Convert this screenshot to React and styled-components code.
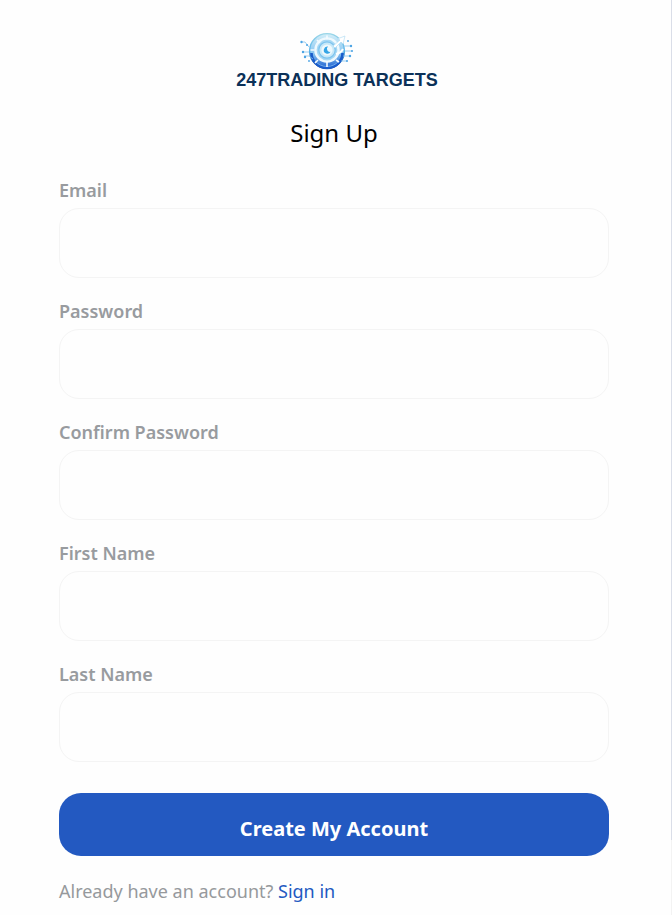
import React, { useState } from "react";
import styled, { createGlobalStyle } from "styled-components";

const GlobalStyle = createGlobalStyle`
    body{
        margin: 0;
        background-color: #fefefe;
        font-family: "Segoe UI", "Noto Sans", sans-serif;
    }
    *{
        box-sizing: border-box;
    }
`

const Page = styled.main`
    display: flex;
    flex-direction: column;
    min-height: 100vh;
    padding: 32px 62px 0 59px;
    border-right: 1px solid;
    border-image: linear-gradient(to top, #f3f3f3 76px, #dadee8 76px) 1;
`

const Logo = styled.div`
    display: flex;
    flex-direction: column;
    align-items: center;
    padding-left: 6px;
    svg{
        display: block;
        margin-right: 20px;
    }
`

const LogoName = styled.span`
    color: #0b3158;
    font-family: "Liberation Sans", Arial, sans-serif;
    font-size: 18px;
    font-weight: bold;
    line-height: 20px;
    white-space: nowrap;
`

const Title = styled.h1`
    margin: 25px 0 27px;
    color: #000;
    font-size: 24px;
    font-weight: 400;
    line-height: 36px;
    text-align: center;
`

const Form = styled.form`
    display: flex;
    flex-direction: column;
    gap: 21px;
`

const Field = styled.div`
    display: flex;
    flex-direction: column;
    gap: 6px;
`

const Label = styled.label`
    color: #989b9f;
    font-size: 18px;
    font-weight: 600;
    line-height: 24px;
`

const Input = styled.input`
    width: 100%;
    height: 70px;
    padding: 0 20px;
    color: #333;
    background-color: #fefefe;
    border: 1px solid #f4f4f4;
    border-radius: 20px;
    font: inherit;
    font-size: 18px;
    &:focus{
        outline: none;
        border-color: #2359c1;
    }
`

const Submit = styled.button`
    height: 63px;
    margin-top: 10px;
    padding: 8px 0 0;
    color: #fff;
    background-color: #2359c1;
    border: none;
    border-radius: 22px;
    font-family: inherit;
    font-size: 20px;
    font-weight: 700;
    cursor: pointer;
`

const Footer = styled.p`
    margin: 22px 0 0;
    color: #96999c;
    font-size: 18px;
    line-height: 26px;
    a{
        color: #2359c1;
        text-decoration: none;
    }
`

const fields = [
    { id: "email", label: "Email", type: "email" },
    { id: "password", label: "Password", type: "password" },
    { id: "confirm", label: "Confirm Password", type: "password" },
    { id: "firstName", label: "First Name", type: "text" },
    { id: "lastName", label: "Last Name", type: "text" },
];

function Emblem(){
    return (
        <svg width="56" height="38" viewBox="0 0 56 38" aria-hidden="true">
            <defs>
                <linearGradient id="ring" x1="0" y1="0" x2="0" y2="1">
                    <stop offset="0" stopColor="#9bd6e8" />
                    <stop offset="0.5" stopColor="#58b4ea" />
                    <stop offset="1" stopColor="#0a3a8c" />
                </linearGradient>
                <linearGradient id="face" x1="0" y1="0" x2="0" y2="1">
                    <stop offset="0" stopColor="#d4eff8" />
                    <stop offset="0.55" stopColor="#8cc8f2" />
                    <stop offset="1" stopColor="#1c5fd0" />
                </linearGradient>
            </defs>
            <circle cx="28" cy="19" r="17.4" fill="url(#face)" stroke="url(#ring)" strokeWidth="1.4" />
            <path d="M12.5 21a15.5 15 0 0 0 31 0" fill="none" stroke="#1a5ccb" strokeWidth="2.6" />
            <path d="M16 29a15.5 15 0 0 0 24 0" fill="none" stroke="#7fb8f0" strokeWidth="0.8" />
            <circle cx="28" cy="18" r="11.6" fill="#a6d8f4" stroke="#eef9fe" strokeWidth="2.4" />
            <circle cx="28" cy="18" r="8.2" fill="#c6e8f8" stroke="#7cc3ee" strokeWidth="1.2" />
            <circle cx="28" cy="18" r="5.6" fill="#eef9fd" />
            <path d="M29 14.6a3.6 3.6 0 1 0 2.6 5.2a3 3 0 0 1-2.6-5.2z" fill="#35a5e6" />
            <path d="M28 3.5v4M28 29v6M11.500 18h4M18 8l3 3M19 28l-3 3M37 28l3 2" stroke="#f4fbff" strokeWidth="1.6" />
            <path d="M34 14l7-6l-3-1l8-3l-2 8l-2-2l-6 6z" fill="#fff" stroke="#a9d9f2" strokeWidth="0.6" />
            <path d="M37 22q5-1 7-5" fill="none" stroke="#fff" strokeWidth="2" />
            <path d="M2 10l4 0l4 5M4 20h6M5 24h5l4 3M45 14h6M46 19h7M44 24h7M42 29h6" fill="none" stroke="#85c3ee" strokeWidth="0.8" />
            <g fill="#4ba3e4">
                <circle cx="2.500" cy="10" r="1.200" />
                <circle cx="8" cy="13" r="1" />
                <circle cx="4" cy="20" r="1.200" />
                <circle cx="6" cy="25" r="1.200" />
                <circle cx="10" cy="29" r="0.900" />
                <circle cx="49" cy="9" r="0.900" />
                <circle cx="52" cy="14" r="1.200" />
                <circle cx="53" cy="19" r="1" />
                <circle cx="51" cy="24" r="1.200" />
                <circle cx="48" cy="29" r="1" />
            </g>
        </svg>
    )
}

function App(){
    const [values, setValues] = useState({});

    const change = (e) => {
        setValues({ ...values, [e.target.name]: e.target.value });
    }
    const submit = (e) => {
        e.preventDefault();
    }

    return  <Page>
                <GlobalStyle />
                <Logo>
                    <Emblem />
                    <LogoName>247TRADING TARGETS</LogoName>
                </Logo>
                <Title>Sign Up</Title>
                <Form onSubmit={submit}>
                    {fields.map((item) => (
                        <Field key={item.id}>
                            <Label htmlFor={item.id}>{item.label}</Label>
                            <Input
                                id={item.id}
                                name={item.id}
                                type={item.type}
                                value={values[item.id] || ""}
                                onChange={change}
                            />
                        </Field>
                    ))}
                    <Submit type="submit">Create My Account</Submit>
                </Form>
                <Footer>
                    Already have an account? <a href="#signin">Sign in</a>
                </Footer>
            </Page>
}

export default App;
